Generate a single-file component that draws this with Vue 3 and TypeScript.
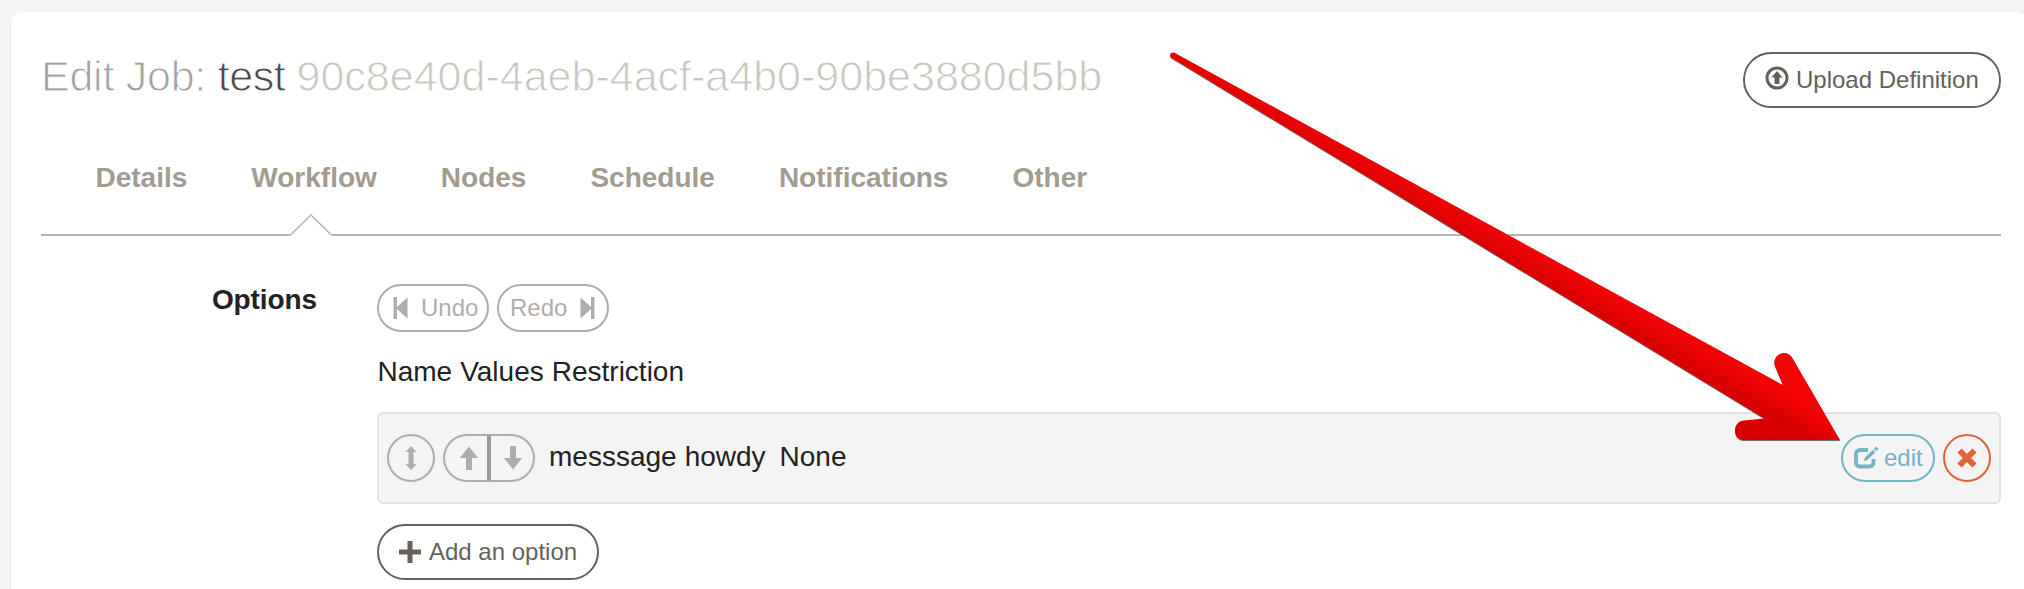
<script setup lang="ts">
interface Tab {
  label: string
  active?: boolean
}

const tabs: Tab[] = [
  { label: 'Details' },
  { label: 'Workflow', active: true },
  { label: 'Nodes' },
  { label: 'Schedule' },
  { label: 'Notifications' },
  { label: 'Other' },
]
const columns: string[] = ['Name', 'Values', 'Restriction']
const option = { name: 'messsage', value: 'howdy', restriction: 'None' }
</script>

<template>
  <main class="page">
    <section class="panel">
      <header class="head">
        <h1 class="title">
          <span class="lead">Edit Job: </span><span class="job">test </span><span class="uuid">90c8e40d-4aeb-4acf-a4b0-90be3880d5bb</span>
        </h1>
        <button class="btn btn-lg upload">
          <svg class="ico-upload" viewBox="0 0 24 24" width="24" height="24">
            <circle cx="12" cy="12" r="10" fill="none" stroke="currentColor" stroke-width="3" />
            <path d="M12 5 17.600 11.500H14.500V18H9.500V11.500H6.400Z" fill="currentColor" />
          </svg>
          <span>Upload Definition</span>
        </button>
      </header>

      <nav class="tabs">
        <a v-for="tab in tabs" :key="tab.label" class="tab">
          {{ tab.label }}
          <svg v-if="tab.active" class="caret" viewBox="0 0 42 22" width="42" height="22">
            <path d="M0.500 22V20.500L21 0.500 41.500 20.500V22Z" fill="#fff" />
            <path d="M0.500 21 21 1 41.500 21" fill="none" stroke="#b5b5b5" stroke-width="1.500" />
          </svg>
        </a>
      </nav>

      <div class="body">
        <label class="label">Options</label>
        <div class="content">
          <div class="history">
            <button class="btn muted undo">
              <svg viewBox="0 0 16 22" width="16" height="22"><path d="M0.500 0H4V10L14.500 0.500V21.500L4 12V22H0.500Z" fill="currentColor" /></svg>
              <span>Undo</span>
            </button>
            <button class="btn muted redo">
              <span>Redo</span>
              <svg viewBox="0 0 16 22" width="16" height="22"><path d="M15.500 0H12V10L1.500 0.500V21.500L12 12V22H15.500Z" fill="currentColor" /></svg>
            </button>
          </div>
          <div class="columns"><span v-for="c in columns" :key="c">{{ c }}</span></div>
          <div class="row">
            <button class="btn muted round">
              <svg viewBox="0 0 12 24" width="12" height="24"><path d="M6 0 11.500 6H8.500V18H11.500L6 24 0.500 18H3.500V6H0.500Z" fill="currentColor" /></svg>
            </button>
            <div class="group">
              <button class="btn muted up">
                <svg viewBox="0 0 20 24" width="20" height="24"><path d="M10 0.500 19.200 12H13V24H7V12H0.800Z" fill="currentColor" /></svg>
              </button>
              <button class="btn muted down">
                <svg viewBox="0 0 20 24" width="20" height="24"><path d="M10 23.500 19.200 12H13V0H7V12H0.800Z" fill="currentColor" /></svg>
              </button>
            </div>
            <div class="option">
              <span>{{ option.name }}</span><span>{{ option.value }}</span><span class="restriction">{{ option.restriction }}</span>
            </div>
            <button class="btn edit">
              <svg viewBox="0 0 26 24" width="26" height="24">
                <path d="M15 4H7.500Q3 4 3 8.500V16Q3 20.500 7.500 20.500H16Q20.500 20.500 20.500 16V13" fill="none" stroke="currentColor" stroke-width="3.800" />
                <path d="M10.500 15.500 12 11.500 19.800 3.700 22.300 6.200 14.500 14Z" fill="currentColor" />
                <path d="M20.800 2.700 23 0.500 25.500 3 23.300 5.200Z" fill="currentColor" />
              </svg>
              <span>edit</span>
            </button>
            <button class="btn remove">
              <svg viewBox="0 0 20 20" width="20" height="20"><path d="M2.500 2.500 17.500 17.500M17.500 2.500 2.500 17.500" fill="none" stroke="currentColor" stroke-width="6" /></svg>
            </button>
          </div>
          <button class="btn btn-lg add">
            <svg viewBox="0 0 22 22" width="22" height="22"><path d="M8.500 0H13.500V8.500H22V13.500H13.500V22H8.500V13.500H0V8.500H8.500Z" fill="currentColor" /></svg>
            <span>Add an option</span>
          </button>
        </div>
      </div>
    </section>

    <svg class="pointer" viewBox="0 0 2024 589" width="2024" height="589">
      <defs>
        <linearGradient id="red" gradientUnits="userSpaceOnUse" x1="1847" y1="428" x2="1835" y2="449">
          <stop offset="0" stop-color="#f30404" />
          <stop offset="1" stop-color="#d80000" />
        </linearGradient>
      </defs>
      <path
        d="M1174.500 52.800 1783 385 1775 366C1771 355 1787 347 1793 359L1840 440H1744C1732 440 1732 421 1744 420.600L1764.500 418.500 1171.500 57.700C1168.500 55.500 1171 51 1174.500 52.800Z"
        fill="url(#red)"
      />
    </svg>
  </main>
</template>

<style>
html,
body {
  background: #f4f4f4;
  overflow: hidden;
}
</style>

<style scoped>
.page {
  position: relative;
  box-sizing: border-box;
  width: 2024px;
  height: 589px;
  padding: 12px 0 0 11px;
  overflow: hidden;
  background: #f4f4f4;
  font-family: 'Liberation Sans', Arial, sans-serif;
  font-size: 28px;
  color: #222;
}
.panel {
  box-sizing: border-box;
  width: 2017px;
  height: 620px;
  padding: 40px 27px 0 30px;
  border-radius: 12px;
  background: #fff;
  box-shadow: 0 2px 2px rgba(0, 0, 0, 0.12);
}
.head {
  display: flex;
  justify-content: space-between;
  height: 56px;
}
.title {
  margin: 0;
  font-size: 43px;
  font-weight: 400;
  line-height: 48px;
  white-space: nowrap;
}
.lead {
  color: #a2a2a2;
  letter-spacing: -0.25px;
  -webkit-text-stroke: 1px #fff;
}
.job {
  color: #484848;
  letter-spacing: -0.5px;
  -webkit-text-stroke: 0.9px #fff;
}
.uuid {
  color: #c8c8c0;
  letter-spacing: 0;
  -webkit-text-stroke: 0.9px #fff;
}
.btn {
  display: flex;
  box-sizing: border-box;
  align-items: center;
  height: 48px;
  margin: 0;
  padding: 0;
  border: 2px solid currentColor;
  border-radius: 24px;
  background: transparent;
  color: #66615b;
  font: 24px/28px 'Liberation Sans', Arial, sans-serif;
  white-space: nowrap;
}
.btn svg {
  flex: none;
}
.btn-lg {
  height: 56px;
  border-radius: 28px;
}
.muted {
  color: #afaeab;
}
.upload {
  width: 258px;
  padding-left: 20px;
  gap: 7px;
}
.ico-upload {
  margin-top: -4px;
}
.tabs {
  display: flex;
  gap: 64px;
  box-sizing: border-box;
  height: 128px;
  padding: 54px 0 0 54.5px;
  border-bottom: 2px solid #b5b5b5;
}
.tab {
  position: relative;
  color: #a29c91;
  font-weight: 700;
  line-height: 32px;
}
.caret {
  position: absolute;
  left: 38.5px;
  top: 52px;
}
.body {
  display: flex;
}
.label {
  box-sizing: border-box;
  width: 336px;
  padding: 48px 60px 0 0;
  font-weight: 700;
  line-height: 32px;
  letter-spacing: -0.1px;
  text-align: right;
}
.content {
  flex: 1;
  padding-top: 48px;
}
.history {
  display: flex;
  gap: 8px;
}
.history .btn {
  width: 112px;
}
.undo {
  padding-left: 14px;
  gap: 12px;
}
.redo {
  padding-left: 11px;
  gap: 12px;
}
.columns {
  display: flex;
  gap: 8px;
  margin-top: 24px;
  padding-left: 0.5px;
  line-height: 32px;
}
.row {
  display: flex;
  align-items: center;
  box-sizing: border-box;
  height: 92px;
  margin-top: 24px;
  padding: 0 8px;
  border: 2px solid #e2e1e8;
  border-radius: 6px;
  background: #f4f4f4;
}
.round,
.remove {
  justify-content: center;
  width: 48px;
}
.group {
  display: flex;
  margin-left: 8px;
}
.group .btn {
  justify-content: center;
  width: 46px;
}
.group .up {
  padding-left: 6px;
  border-right-color: #9e9996;
  border-radius: 24px 0 0 24px;
}
.group .down {
  padding-left: 2px;
  border-left-color: #9e9996;
  border-radius: 0 24px 24px 0;
}
.option {
  display: flex;
  flex: 1;
  gap: 8px;
  margin: 0 0 2px 14px;
  line-height: 32px;
}
.restriction {
  margin-left: 6px;
}
.edit {
  width: 94px;
  padding-left: 10px;
  gap: 5px;
  color: #78b2c7;
}
.remove {
  margin-left: 8px;
  color: #df6538;
}
.add {
  width: 222px;
  margin-top: 20px;
  padding-left: 20px;
  gap: 8px;
}
.pointer {
  position: absolute;
  left: 0;
  top: 0;
  filter: drop-shadow(0 1px 0.6px rgba(0, 0, 0, 0.55));
}
</style>
